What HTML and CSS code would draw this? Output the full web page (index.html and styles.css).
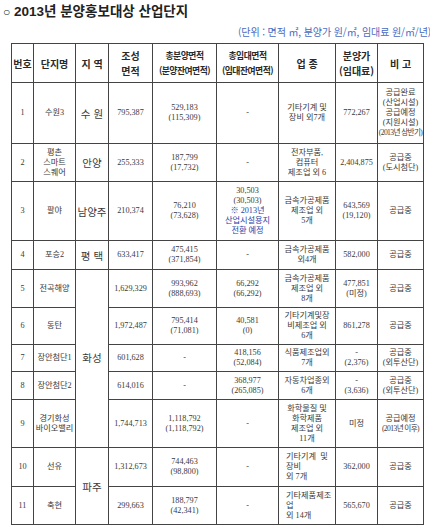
FILE: index.html
```html
<!DOCTYPE html>
<html lang="ko">
<head>
<meta charset="utf-8">
<link rel="stylesheet" href="styles.css">
</head>
<body>
<div class="page">
  <h1 class="title"><span class="bullet">○</span> 2013년 분양홍보대상 산업단지</h1>
  <div class="unit">(단위 : 면적 ㎡, 분양가 원/㎡, 임대료 원/㎡/년)</div>
  <table class="grid">
    <colgroup>
      <col class="c-no"><col class="c-name"><col class="c-region"><col class="c-area">
      <col class="c-sale"><col class="c-lease"><col class="c-ind"><col class="c-price"><col class="c-note">
    </colgroup>
    <thead>
      <tr class="r-head">
        <th>번호</th><th>단지명</th><th>지 역</th><th><div class="hl">조성</div><div class="hl">면적</div></th>
        <th class="tight"><div class="hl">총분양면적</div><div class="hl">(분양잔여면적)</div></th>
        <th class="tight"><div class="hl">총임대면적</div><div class="hl">(임대잔여면적)</div></th>
        <th>업 종</th><th><div class="hl">분양가</div><div class="hl">(임대료)</div></th><th>비 고</th>
      </tr>
    </thead>
    <tbody>
      <tr class="r1">
        <td>1</td><td>수원3</td><td class="big">수 원</td><td>795,387</td>
        <td>529,183<br>(115,309)</td><td>-</td><td>기타기계 및<br>장비 외7개</td><td>772,267</td>
        <td class="note">공급완료<br>(산업시설)<br>공급예정<br>(지원시설)<br><span class="squeeze">(2013년 상반기)</span></td>
      </tr>
      <tr class="r2">
        <td>2</td><td>평촌<br>스마트<br>스퀘어</td><td class="big">안양</td><td>255,333</td>
        <td>187,799<br>(17,732)</td><td>-</td><td>전자부품,<br>컴퓨터<br>제조업 외 6</td><td>2,404,875</td>
        <td>공급중<br>(도시첨단)</td>
      </tr>
      <tr class="r3">
        <td>3</td><td>팔야</td><td class="big">남양주</td><td>210,374</td>
        <td>76,210<br>(73,628)</td>
        <td>30,503<br>(30,503)<br><span class="blue">※ 2013년<br>산업시설용지<br>전환 예정</span></td>
        <td>금속가공제품<br>제조업 외<br>5개</td><td>643,569<br>(19,120)</td><td>공급중</td>
      </tr>
      <tr class="r4">
        <td>4</td><td>포승2</td><td class="big">평 택</td><td>633,417</td>
        <td>475,415<br>(371,854)</td><td>-</td><td>금속가공제품<br>외4개</td><td>582,000</td><td>공급중</td>
      </tr>
      <tr class="r5">
        <td>5</td><td>전곡해양</td><td class="big region" rowspan="5">화성</td><td>1,629,329</td>
        <td>993,962<br>(888,693)</td><td>66,292<br>(66,292)</td><td>금속가공제품<br>제조업 외<br>8개</td>
        <td>477,851<br>(미정)</td><td>공급중</td>
      </tr>
      <tr class="r6">
        <td>6</td><td>동탄</td><td>1,972,487</td>
        <td>795,414<br>(71,081)</td><td>40,581<br>(0)</td><td>기타기계및장<br>비제조업 외<br>6개</td>
        <td>861,278</td><td>공급중</td>
      </tr>
      <tr class="r7">
        <td>7</td><td>장안첨단1</td><td>601,628</td>
        <td>-</td><td>418,156<br>(52,084)</td><td>식품제조업외<br>7개</td>
        <td>-<br>(2,376)</td><td>공급중<br>(외투산단)</td>
      </tr>
      <tr class="r8">
        <td>8</td><td>장안첨단2</td><td>614,016</td>
        <td>-</td><td>368,977<br>(265,085)</td><td>자동차업종외<br>6개</td>
        <td>-<br>(3,636)</td><td>공급중<br>(외투산단)</td>
      </tr>
      <tr class="r9">
        <td>9</td><td>경기화성<br>바이오밸리</td><td>1,744,713</td>
        <td>1,118,792<br>(1,118,792)</td><td>-</td><td>화학물질 및<br>화학제품<br>제조업 외<br>11개</td>
        <td>미정</td><td>공급예정<br><span class="squeeze">(2013년 이후)</span></td>
      </tr>
      <tr class="r10">
        <td>10</td><td>선유</td><td class="big" rowspan="2">파주</td><td>1,312,673</td>
        <td>744,463<br>(98,800)</td><td>-</td><td class="left">기타기계 &nbsp;및<br>장비<br>외 7개</td>
        <td>362,000</td><td>공급중</td>
      </tr>
      <tr class="r11">
        <td>11</td><td>축현</td><td>299,663</td>
        <td>188,797<br>(42,341)</td><td>-</td><td class="left">기타제품제조<br>업<br>외 14개</td>
        <td>565,670</td><td>공급중</td>
      </tr>
    </tbody>
  </table>
</div>
</body>
</html>
```

FILE: styles.css
```css
html, body {
  margin: 0;
  padding: 0;
  background: #ffffff;
}

.page {
  width: 430px;
  height: 531px;
  overflow: hidden;
  font-family: "Liberation Serif", "Noto Sans CJK KR", serif;
  color: #333333;
}

.title {
  margin: 0;
  padding: 3px 0 0 3px;
  height: 18px;
  font-family: "Liberation Sans", "Noto Sans CJK KR", sans-serif;
  font-size: 13.5px;
  line-height: 17px;
  font-weight: bold;
  color: #222222;
  white-space: nowrap;
}

.bullet {
  font-weight: normal;
  font-size: 12px;
}

.unit {
  height: 22px;
  padding-left: 238px;
  padding-top: 4px;
  box-sizing: border-box;
  font-family: "Noto Sans CJK KR", sans-serif;
  font-size: 10px;
  line-height: 14px;
  color: #4a6ac0;
  white-space: nowrap;
  letter-spacing: -0.1px;
  overflow: hidden;
}

.grid {
  margin-left: 11px;
  width: 412px;
  table-layout: fixed;
  border-collapse: collapse;
  border: 1px solid #333333;
}

.c-no { width: 22px; }
.c-name { width: 42px; }
.c-region { width: 33px; }
.c-area { width: 44px; }
.c-sale { width: 64px; }
.c-lease { width: 62px; }
.c-ind { width: 57px; }
.c-price { width: 42px; }
.c-note { width: 46px; }

.grid th,
.grid td {
  border: 1px solid #444444;
  padding: 0;
  text-align: center;
  vertical-align: middle;
  overflow: hidden;
}

.grid th {
  font-family: "Noto Sans CJK KR", sans-serif;
  font-weight: bold;
  font-size: 10px;
  line-height: 15px;
  color: #2a2a2a;
  white-space: nowrap;
}

.hl {
  height: 15px;
  line-height: 15px;
}

.grid th.tight {
  font-size: 8.8px;
  letter-spacing: -0.5px;
}

.grid td {
  font-size: 8.2px;
  line-height: 10px;
  color: #3a3a3a;
  white-space: nowrap;
}

.grid td.big {
  font-family: "Noto Sans CJK KR", sans-serif;
  font-size: 10.5px;
  line-height: 13px;
}

.grid td.region {
  vertical-align: top;
  padding-top: 81px;
}

.grid td.left {
  text-align: left;
  padding-left: 7px;
}

.grid td.note {
  line-height: 10px;
}

.squeeze {
  display: inline-block;
  letter-spacing: -0.6px;
  font-size: 7.6px;
}

.blue {
  color: #2a3fa8;
}

.r-head { height: 39px; }
.r1 { height: 61px; }
.r2 { height: 38px; }
.r3 { height: 59px; }
.r4 { height: 29px; }
.r5 { height: 38px; }
.r6 { height: 37px; }
.r7 { height: 27px; }
.r8 { height: 28px; }
.r9 { height: 48px; }
.r10 { height: 39px; }
.r11 { height: 38px; }
```
